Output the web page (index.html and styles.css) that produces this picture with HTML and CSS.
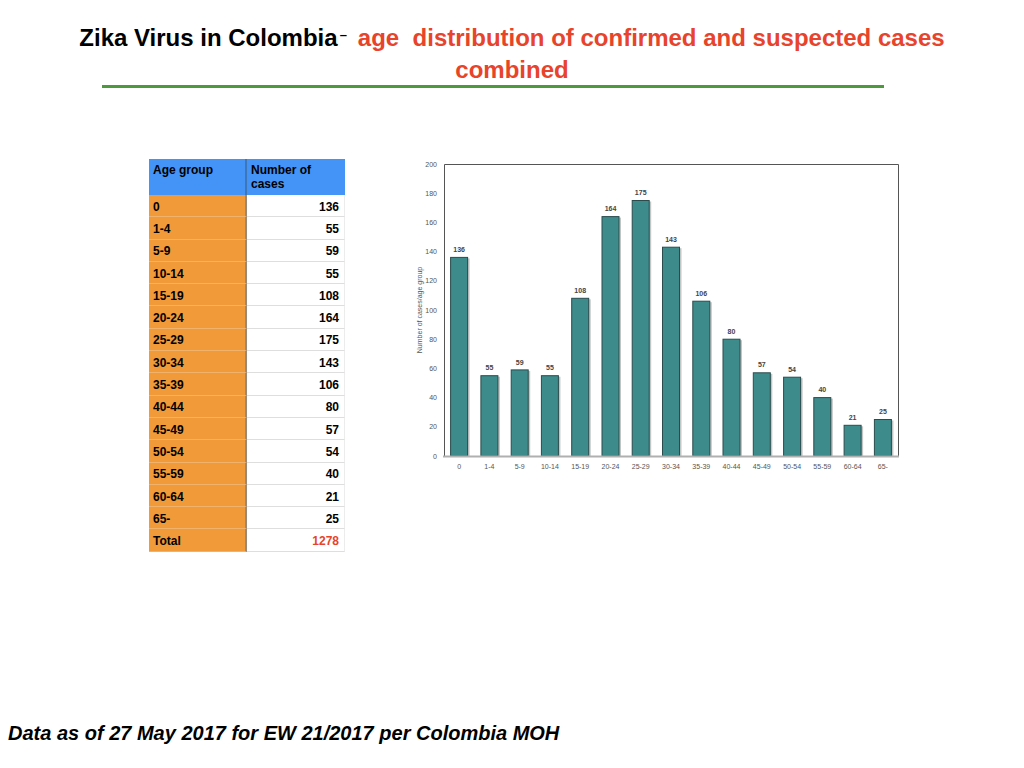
FILE: index.html
```html
<!DOCTYPE html>
<html>
<head>
<meta charset="utf-8">
<link rel="stylesheet" href="styles.css">
</head>
<body>
<div class="slide">
  <h1 class="title"><span class="title-black">Zika Virus in Colombia</span><span class="dash">–</span><span class="title-red">age&nbsp; distribution of confirmed and suspected cases<br>combined</span></h1>
  <div class="rule"></div>

  <div class="content">
    <div class="tbl">
      <div class="cell c1 head">Age group</div><div class="cell c2 head">Number of cases</div>
      <div class="cell c1">0</div><div class="cell c2">136</div>
      <div class="cell c1">1-4</div><div class="cell c2">55</div>
      <div class="cell c1">5-9</div><div class="cell c2">59</div>
      <div class="cell c1">10-14</div><div class="cell c2">55</div>
      <div class="cell c1">15-19</div><div class="cell c2">108</div>
      <div class="cell c1">20-24</div><div class="cell c2">164</div>
      <div class="cell c1">25-29</div><div class="cell c2">175</div>
      <div class="cell c1">30-34</div><div class="cell c2">143</div>
      <div class="cell c1">35-39</div><div class="cell c2">106</div>
      <div class="cell c1">40-44</div><div class="cell c2">80</div>
      <div class="cell c1">45-49</div><div class="cell c2">57</div>
      <div class="cell c1">50-54</div><div class="cell c2">54</div>
      <div class="cell c1">55-59</div><div class="cell c2">40</div>
      <div class="cell c1">60-64</div><div class="cell c2">21</div>
      <div class="cell c1">65-</div><div class="cell c2">25</div>
      <div class="cell c1">Total</div><div class="cell c2 total">1278</div>
    </div>

    <svg class="chart" width="500" height="320" viewBox="0 0 500 320">
      <g class="ylab">
        <text x="32" y="303.5">0</text>
        <text x="32" y="274.3">20</text>
        <text x="32" y="245.1">40</text>
        <text x="32" y="215.9">60</text>
        <text x="32" y="186.7">80</text>
        <text x="32" y="157.5">100</text>
        <text x="32" y="128.3">120</text>
        <text x="32" y="99.1">140</text>
        <text x="32" y="69.9">160</text>
        <text x="32" y="40.7">180</text>
        <text x="32" y="11.5">200</text>
      </g>
      <text class="ytitle" x="0" y="0" transform="translate(16.5 155) rotate(-90)">Number of cases/age group</text>

      <path class="frame" d="M39.5 301 V9.5 H493.5 V301"/>

      <g class="shadow">
        <rect x="46.6" y="103.4" width="18" height="197.6"/>
        <rect x="76.9" y="221.7" width="18" height="79.3"/>
        <rect x="107.2" y="215.9" width="18" height="85.1"/>
        <rect x="137.4" y="221.7" width="18" height="79.3"/>
        <rect x="167.7" y="144.3" width="18" height="156.7"/>
        <rect x="198.0" y="62.6" width="18" height="238.4"/>
        <rect x="228.2" y="46.5" width="18" height="254.5"/>
        <rect x="258.5" y="93.2" width="18" height="207.8"/>
        <rect x="288.8" y="147.2" width="18" height="153.8"/>
        <rect x="319.0" y="185.2" width="18" height="115.8"/>
        <rect x="349.3" y="218.8" width="18" height="82.2"/>
        <rect x="379.6" y="223.2" width="18" height="77.8"/>
        <rect x="409.8" y="243.6" width="18" height="57.4"/>
        <rect x="440.1" y="271.3" width="18" height="29.7"/>
        <rect x="470.4" y="265.5" width="18" height="35.5"/>
      </g>
      <g class="bars">
        <rect x="45.6" y="102.4" width="17" height="198.6"/>
        <rect x="75.9" y="220.7" width="17" height="80.3"/>
        <rect x="106.2" y="214.9" width="17" height="86.1"/>
        <rect x="136.4" y="220.7" width="17" height="80.3"/>
        <rect x="166.7" y="143.3" width="17" height="157.7"/>
        <rect x="197.0" y="61.6" width="17" height="239.4"/>
        <rect x="227.2" y="45.5" width="17" height="255.5"/>
        <rect x="257.5" y="92.2" width="17" height="208.8"/>
        <rect x="287.8" y="146.2" width="17" height="154.8"/>
        <rect x="318.0" y="184.2" width="17" height="116.8"/>
        <rect x="348.3" y="217.8" width="17" height="83.2"/>
        <rect x="378.6" y="222.2" width="17" height="78.8"/>
        <rect x="408.8" y="242.6" width="17" height="58.4"/>
        <rect x="439.1" y="270.3" width="17" height="30.7"/>
        <rect x="469.4" y="264.5" width="17" height="36.5"/>
      </g>
      <line class="xaxis" x1="38" y1="301.5" x2="494" y2="301.5"/>

      <g class="vals">
        <text x="54.1" y="97">136</text>
        <text x="84.4" y="215.3">55</text>
        <text x="114.7" y="209.5">59</text>
        <text x="144.9" y="215.3">55</text>
        <text x="175.2" y="137.9">108</text>
        <text x="205.5" y="56.2">164</text>
        <text x="235.7" y="40.1">175</text>
        <text x="266.0" y="86.8">143</text>
        <text x="296.3" y="140.8">106</text>
        <text x="326.5" y="178.8">80</text>
        <text x="356.8" y="212.4">57</text>
        <text x="387.1" y="216.8">54</text>
        <text x="417.3" y="237.2">40</text>
        <text x="447.6" y="264.9">21</text>
        <text x="477.9" y="259.1">25</text>
      </g>
      <g class="xlab">
        <text x="54.1" y="313.5">0</text>
        <text x="84.4" y="313.5">1-4</text>
        <text x="114.7" y="313.5">5-9</text>
        <text x="144.9" y="313.5">10-14</text>
        <text x="175.2" y="313.5">15-19</text>
        <text x="205.5" y="313.5">20-24</text>
        <text x="235.7" y="313.5">25-29</text>
        <text x="266.0" y="313.5">30-34</text>
        <text x="296.3" y="313.5">35-39</text>
        <text x="326.5" y="313.5">40-44</text>
        <text x="356.8" y="313.5">45-49</text>
        <text x="387.1" y="313.5">50-54</text>
        <text x="417.3" y="313.5">55-59</text>
        <text x="447.6" y="313.5">60-64</text>
        <text x="477.9" y="313.5">65-</text>
      </g>
    </svg>
  </div>

  <p class="footer">Data as of 27 May 2017 for EW 21/2017 per Colombia MOH</p>
</div>
</body>
</html>
```

FILE: styles.css
```css
html, body {
  margin: 0;
  padding: 0;
  background: #ffffff;
}

.slide {
  width: 1024px;
  height: 768px;
  display: flex;
  flex-direction: column;
  font-family: "Liberation Sans", Arial, sans-serif;
  overflow: hidden;
}

.title {
  margin: 22px 0 0 0;
  font-size: 24px;
  line-height: 32px;
  font-weight: bold;
  text-align: center;
}

.title-black {
  color: #000000;
}

.dash {
  display: inline-block;
  font-size: 13px;
  line-height: 13px;
  vertical-align: 7px;
  margin: 0 11px 0 2px;
  color: #000000;
}

.title-red {
  color: #e8432b;
}

.rule {
  margin: -1px 0 0 102px;
  width: 782px;
  height: 3px;
  background: #4c9a3b;
}

.content {
  display: flex;
  align-items: flex-start;
  gap: 60px;
  margin-top: 71px;
  padding-left: 149px;
}

.tbl {
  display: grid;
  grid-template-columns: 98px 98px;
  grid-template-rows: 36px;
  grid-auto-rows: 22.3px;
  font-size: 12px;
  font-weight: bold;
  color: #000000;
}

.cell {
  display: flex;
  align-items: center;
  box-sizing: border-box;
  line-height: 14px;
  padding-top: 2px;
}

.c1 {
  background: #f09a3a;
  border-right: 2px solid #9a8877;
  border-bottom: 1px solid #f3b26b;
  padding-left: 4px;
}

.c2 {
  background: #ffffff;
  justify-content: flex-end;
  padding-right: 5px;
  border-bottom: 1px solid #dedede;
  border-right: 1px solid #ececec;
}

.head {
  background: #4493f6;
  align-items: flex-start;
  padding-top: 4px;
  border-bottom: none;
}

.c1.head {
  border-right: 2px solid #3d77b8;
}

.c2.head {
  justify-content: flex-start;
  padding-left: 4px;
  padding-right: 8px;
  border-right: none;
}

.total {
  color: #e8432b;
}

.chart {
  display: block;
  margin-top: -4px;
  font-family: "Liberation Sans", Arial, sans-serif;
}

.ylab text {
  font-size: 7px;
  fill: #555555;
  text-anchor: end;
}

.ytitle {
  font-size: 7px;
  fill: #555555;
  text-anchor: middle;
}

.frame {
  fill: none;
  stroke: #555555;
  stroke-width: 1;
}

.shadow rect {
  fill: #c4c4c4;
}

.bars rect {
  fill: #3e8b8c;
  stroke: #2a4c4d;
  stroke-width: 1;
}

.xaxis {
  stroke: #b0b0b0;
  stroke-width: 2;
}

.vals text {
  font-size: 7px;
  font-weight: bold;
  fill: #444444;
  text-anchor: middle;
}

.xlab text {
  font-size: 7px;
  fill: #555555;
  text-anchor: middle;
}

.footer {
  margin: auto 0 23px 8px;
  font-size: 20px;
  line-height: 24px;
  font-weight: bold;
  font-style: italic;
  color: #000000;
}
```
